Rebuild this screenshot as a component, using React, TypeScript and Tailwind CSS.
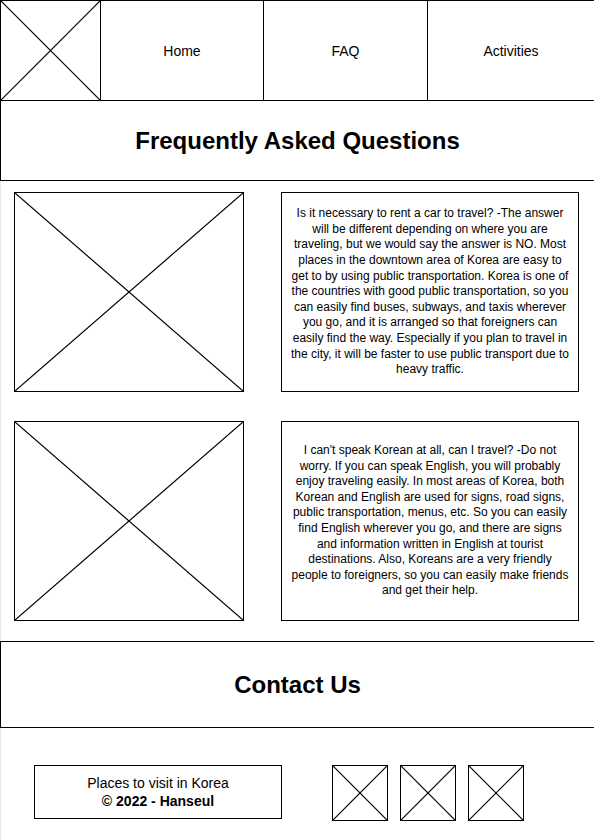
import React from "react";

function CrossBox({ className = "" }: { className?: string }) {
  // Wireframe placeholder: a box with an X through it
  return (
    <div className={`relative border border-black ${className}`}>
      <svg className="absolute inset-0 h-full w-full" preserveAspectRatio="none" viewBox="0 0 100 100">
        <line x1="0" y1="0" x2="100" y2="100" stroke="black" strokeWidth="1.2" vectorEffect="non-scaling-stroke" />
        <line x1="100" y1="0" x2="0" y2="100" stroke="black" strokeWidth="1.2" vectorEffect="non-scaling-stroke" />
      </svg>
    </div>
  );
}

const faqs = [
  "Is it necessary to rent a car to travel? -The answer will be different depending on where you are traveling, but we would say the answer is NO. Most places in the downtown area of Korea are easy to get to by using public transportation. Korea is one of the countries with good public transportation, so you can easily find buses, subways, and taxis wherever you go, and it is arranged so that foreigners can easily find the way. Especially if you plan to travel in the city, it will be faster to use public transport due to heavy traffic.",
  "I can't speak Korean at all, can I travel? -Do not worry. If you can speak English, you will probably enjoy traveling easily. In most areas of Korea, both Korean and English are used for signs, road signs, public transportation, menus, etc. So you can easily find English wherever you go, and there are signs and information written in English at tourist destinations. Also, Koreans are a very friendly people to foreigners, so you can easily make friends and get their help.",
];

export default function App() {
  return (
    <div className="min-h-[840px] w-[594px] bg-white font-['Liberation_Sans',Arial,sans-serif] text-black">
      {/* Header / nav */}
      <header className="flex h-[101px] border-y border-l border-black">
        <div className="relative w-[100px] border-r border-black">
          <svg className="absolute inset-0 h-full w-full" preserveAspectRatio="none" viewBox="0 0 100 100">
            <line x1="0" y1="0" x2="100" y2="100" stroke="black" strokeWidth="1.2" vectorEffect="non-scaling-stroke" />
            <line x1="100" y1="0" x2="0" y2="100" stroke="black" strokeWidth="1.2" vectorEffect="non-scaling-stroke" />
          </svg>
        </div>
        <a className="flex w-[163px] items-center justify-center border-r border-black pt-[2px] text-[14px]">Home</a>
        <a className="flex w-[164px] items-center justify-center border-r border-black pt-[2px] text-[14px]">FAQ</a>
        <a className="flex flex-1 items-center justify-center pt-[2px] text-[14px]">Activities</a>
      </header>

      <section className="flex h-[80px] items-center justify-center border-b border-l border-black">
        <h1 className="text-[24px] font-bold">Frequently Asked Questions</h1>
      </section>

      {/* FAQ rows */}
      <section className="flex flex-col gap-[29px] border-l border-[#e6e6e6] px-[13px] pb-[20px] pt-[11px]">
        {faqs.map((text, i) => (
          <div key={i} className="flex h-[200px]">
            <CrossBox className="h-[200px] w-[230px]" />
            <div className="ml-[37px] flex h-[200px] w-[298px] items-center justify-center border border-black px-[9px] text-center text-[12px] leading-[15.6px]">
              {text}
            </div>
          </div>
        ))}
      </section>

      <section className="flex h-[87px] items-center justify-center border-y border-l border-black">
        <h2 className="text-[24px] font-bold">Contact Us</h2>
      </section>

      {/* Footer */}
      <footer className="flex items-start border-l border-[#e6e6e6] pb-[20px] pl-[33px] pt-[37px]">
        <div className="flex h-[54px] w-[248px] flex-col items-center justify-center border border-black text-[14px] leading-[18px]">
          <span>Places to visit in Korea</span>
          <span className="font-bold">© 2022 - Hanseul</span>
        </div>
        <div className="ml-[50px] flex gap-[12px]">
          <CrossBox className="h-[56px] w-[56px]" />
          <CrossBox className="h-[56px] w-[56px]" />
          <CrossBox className="h-[56px] w-[56px]" />
        </div>
      </footer>
    </div>
  );
}
